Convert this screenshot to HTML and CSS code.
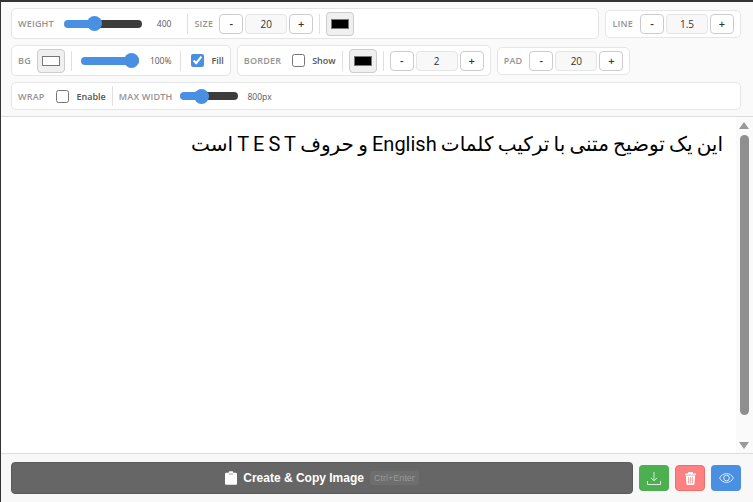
FILE: index.html
```html
<!DOCTYPE html>
<html lang="en">

<head>
    <meta charset="UTF-8" />
    <title>Text to Image</title>
    <link rel="stylesheet" href="styles.css">
</head>

<body>
    <div class="app">
        <!-- Toolbar -->
        <div class="toolbar">
            <div class="row">
                <div class="group grow">
                    <span class="label">WEIGHT</span>
                    <input class="slider weight" type="range" min="100" max="900" value="400">
                    <span class="value val-weight">400</span>
                    <span class="sep"></span>
                    <span class="label">SIZE</span>
                    <div class="stepper tight">
                        <button class="step">-</button><span class="num">20</span><button class="step">+</button>
                    </div>
                    <span class="sep"></span>
                    <button class="swatch"><span class="chip black"></span></button>
                </div>
                <div class="group small">
                    <span class="label">LINE</span>
                    <div class="stepper">
                        <button class="step">-</button><span class="num">1.5</span><button class="step">+</button>
                    </div>
                </div>
            </div>

            <div class="row">
                <div class="group">
                    <span class="label">BG</span>
                    <button class="swatch"><span class="chip white"></span></button>
                    <span class="sep"></span>
                    <input class="slider opacity" type="range" min="0" max="100" value="100">
                    <span class="value val-opacity">100%</span>
                    <span class="sep"></span>
                    <label class="check"><input type="checkbox" checked> Fill</label>
                </div>
                <div class="group">
                    <span class="label">BORDER</span>
                    <label class="check"><input type="checkbox"> Show</label>
                    <span class="sep"></span>
                    <button class="swatch"><span class="chip black"></span></button>
                    <span class="sep"></span>
                    <div class="stepper">
                        <button class="step">-</button><span class="num">2</span><button class="step">+</button>
                    </div>
                </div>
                <div class="group small">
                    <span class="label">PAD</span>
                    <div class="stepper">
                        <button class="step">-</button><span class="num">20</span><button class="step">+</button>
                    </div>
                </div>
            </div>

            <div class="row">
                <div class="group grow thin">
                    <span class="label">WRAP</span>
                    <label class="check wide"><input type="checkbox"> Enable</label>
                    <span class="sep"></span>
                    <span class="label">MAX WIDTH</span>
                    <input class="slider maxw" type="range" min="200" max="2000" value="800">
                    <span class="value val-maxw">800px</span>
                </div>
            </div>
        </div>

        <!-- Text area -->
        <div class="editor">
            <div class="text" dir="rtl">این یک توضیح متنی با ترکیب کلمات English و حروف T E S T است</div>
            <div class="scrollbar">
                <span class="arrow up"></span>
                <div class="track"><span class="thumb"></span></div>
                <span class="arrow down"></span>
            </div>
        </div>

        <!-- Actions -->
        <div class="footer">
            <button class="create">
                <svg width="12" height="14" viewBox="0 0 14 16"><path fill="#fff" d="M1.500 2H4.500V1.200C4.500.5 5 0 5.700 0H8.300C9 0 9.500.5 9.500 1.200V2H12.500C13.300 2 14 2.700 14 3.500V14.500C14 15.300 13.300 16 12.500 16H1.500C.7 16 0 15.300 0 14.500V3.500C0 2.700.7 2 1.500 2Z"/><path fill="#666" d="M4.500 3H9.500V3.700H4.500Z"/></svg>
                <span>Create &amp; Copy Image</span>
                <span class="hint">Ctrl+Enter</span>
            </button>
            <button class="icon-btn green">
                <svg width="14" height="13" viewBox="0 0 14 13" fill="none" stroke="#e8f5e9" stroke-width=".9"><path d="M7 0V8.500M4 5.800L7 8.800L10 5.800M.5 9V12.500H13.500V9"/></svg>
            </button>
            <button class="icon-btn red">
                <svg width="11" height="13" viewBox="0 0 11 13"><path fill="#fff" d="M0 1.500H3V.8C3 .4 3.400 0 3.800 0H7.200C7.600 0 8 .4 8 .8V1.500H11V2.800H0ZM.8 3.500H10.200L9.500 12C9.400 12.600 9 13 8.400 13H2.600C2 13 1.600 12.600 1.500 12Z"/><path stroke="#ff8080" stroke-width=".7" d="M3.500 5V11.500M5.500 5V11.500M7.500 5V11.500"/></svg>
            </button>
            <button class="icon-btn blue">
                <svg width="15" height="10" viewBox="0 0 15 10" fill="none" stroke="#eef5fd" stroke-width=".9"><path d="M.6 5C2.200 2 4.600.6 7.500 .6S12.800 2 14.400 5C12.800 8 10.400 9.400 7.500 9.400S2.200 8 .6 5Z"/><circle cx="7.500" cy="5" r="2.800"/></svg>
            </button>
        </div>
    </div>
</body>

</html>
```

FILE: styles.css
```css
* {
    box-sizing: border-box;
}

html,
body {
    height: 100%;
}

body {
    margin: 0;
    font-family: "Open Sans", Arial, sans-serif;
    background: #333;
    overflow: hidden;
}

.app {
    height: 500px;
    margin: 2px 0 0 1px;
    background: #fff;
    display: flex;
    flex-direction: column;
}

.toolbar {
    height: 115px;
    flex: none;
    padding: 6px 12px 0 10px;
    background: #fafafa;
    border-bottom: 1px solid #ddd;
    display: flex;
    flex-direction: column;
    gap: 6px;
}

.row {
    display: flex;
    align-items: center;
    gap: 6px;
}

.group {
    height: 31px;
    padding: 0 6px;
    background: #fff;
    border: 1px solid #e5e5e5;
    border-radius: 5px;
    display: flex;
    align-items: center;
    flex: none;
}

.group.grow {
    flex: 1;
}

.group.thin {
    height: 28px;
}

.group.small {
    height: 28px;
}

.label {
    font-size: 9px;
    font-weight: 600;
    color: #939393;
    letter-spacing: 0.2px;
}

.sep {
    width: 1px;
    height: 20px;
    background: #e0e0e0;
    margin: 0 6px;
    flex: none;
}

.slider {
    -webkit-appearance: none;
    appearance: none;
    height: 8px;
    margin: 0;
    border-radius: 4px;
    background: #3d3d3d;
    flex: none;
}

.slider::-webkit-slider-thumb {
    -webkit-appearance: none;
    appearance: none;
    width: 15px;
    height: 15px;
    border-radius: 50%;
    background: #4a90e2;
}

.slider.weight {
    width: 78px;
    margin-left: 10px;
    background: linear-gradient(to right, #4a90e2 40%, #3d3d3d 40%);
}

.slider.opacity {
    width: 58px;
    margin-left: 3px;
    background: #4a90e2;
}

.slider.maxw {
    width: 58px;
    margin-left: 7px;
    background: linear-gradient(to right, #4a90e2 35%, #3d3d3d 35%);
}

.value {
    font-size: 8.5px;
    color: #555;
    flex: none;
}

.val-weight {
    margin-left: 15px;
    margin-right: 10px;
}

.val-opacity {
    margin-left: 11px;
    margin-right: 3px;
}

.val-maxw {
    margin-left: 10px;
}

.stepper {
    display: flex;
    align-items: center;
    gap: 2px;
    margin-left: 7px;
}

.stepper.tight {
    margin-left: 6px;
}

.sep + .stepper {
    margin-left: 0;
}

.step {
    width: 24px;
    height: 20px;
    padding: 0;
    background: #fff;
    border: 1px solid #ccc;
    border-radius: 4px;
    font-family: inherit;
    font-size: 11px;
    font-weight: 600;
    line-height: 1;
    color: #333;
}

.num {
    width: 42px;
    height: 20px;
    background: #f8f8f8;
    border: 1px solid #e5e5e5;
    border-radius: 4px;
    font-size: 10px;
    line-height: 18px;
    text-align: center;
    color: #333;
}

.swatch {
    width: 28px;
    height: 24px;
    padding: 0;
    background: #f0f0f0;
    border: 1px solid #ccc;
    border-radius: 4px;
    display: flex;
    align-items: center;
    justify-content: center;
    flex: none;
}

.chip {
    width: 18px;
    height: 10px;
    border: 1px solid #777;
}

.chip.black {
    background: #000;
}

.chip.white {
    background: #fff;
}

.check {
    display: flex;
    align-items: center;
    gap: 7px;
    margin-left: 11px;
    font-size: 9px;
    font-weight: 600;
    color: #555;
}

.check.wide {
    gap: 8px;
}

.sep + .check {
    margin-left: 4px;
}

.check input {
    width: 13px;
    height: 13px;
    margin: 0;
    accent-color: #4a90e2;
}

.group .swatch:nth-child(2) {
    margin-left: 6px;
}

.editor {
    flex: 1;
    display: flex;
    min-height: 0;
    background: #fff;
}

.text {
    flex: 1;
    padding: 12px 13px 0 0;
    font-family: Roboto, "DejaVu Sans", sans-serif;
    font-size: 20px;
    line-height: 30px;
    word-spacing: -0.8px;
    color: #000;
}

.scrollbar {
    width: 17px;
    background: #fafafa;
    display: flex;
    flex-direction: column;
    align-items: center;
    padding: 5px 1px 4px 0;
    flex: none;
}

.arrow {
    width: 0;
    height: 0;
    border-left: 5px solid transparent;
    border-right: 5px solid transparent;
    flex: none;
}

.arrow.up {
    border-bottom: 7px solid #999;
}

.arrow.down {
    border-top: 7px solid #999;
}

.track {
    flex: 1;
    width: 9px;
    padding: 6px 0 27px;
    display: flex;
}

.thumb {
    flex: 1;
    background: #8f8f8f;
    border-radius: 5px;
}

.footer {
    height: 49px;
    flex: none;
    padding: 8px 12px 8px 10px;
    background: #f8f8f8;
    border-top: 1px solid #ddd;
    display: flex;
    align-items: center;
    gap: 6px;
}

.create {
    flex: 1;
    height: 32px;
    background: #666;
    border: 1px solid #5a5a5a;
    border-radius: 4px;
    color: #fff;
    font-family: "Liberation Sans", Arial, sans-serif;
    font-size: 12px;
    font-weight: 700;
    display: flex;
    align-items: center;
    justify-content: center;
    gap: 6px;
}

.hint {
    padding: 2px 4px;
    background: #6e6e6e;
    border-radius: 3px;
    font-size: 9px;
    font-weight: 400;
    color: #999;
}

.icon-btn {
    width: 30px;
    height: 26px;
    padding: 0;
    border-radius: 4px;
    border: 1px solid transparent;
    display: flex;
    align-items: center;
    justify-content: center;
    flex: none;
}

.icon-btn.green {
    background: #4caf50;
}

.icon-btn.red {
    background: #ff8080;
    border-color: #f56c6c;
}

.icon-btn.blue {
    background: #4a90e2;
}
```
